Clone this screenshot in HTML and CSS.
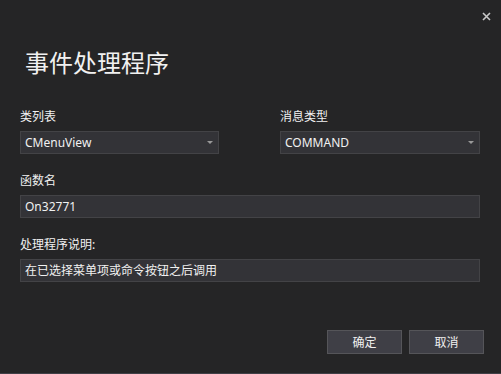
FILE: index.html
```html
<!DOCTYPE html>
<html lang="zh-CN">
<head>
    <meta charset="UTF-8">
    <title>事件处理程序</title>
    <link rel="stylesheet" href="styles.css">
</head>
<body>
    <div class="dialog">
        <div class="close">
            <svg width="9" height="9" viewBox="0 0 9 9"><path d="M1 1L8 8M8 1L1 8" stroke="#c8c8c8" stroke-width="1.6"/></svg>
        </div>
        <div class="title">事件处理程序</div>
        <div class="form">
            <div class="row">
                <div class="field half">
                    <div class="label">类列表</div>
                    <div class="box combo"><span>CMenuView</span><i class="arrow"></i></div>
                </div>
                <div class="field half">
                    <div class="label">消息类型</div>
                    <div class="box combo"><span>COMMAND</span><i class="arrow"></i></div>
                </div>
            </div>
            <div class="field">
                <div class="label">函数名</div>
                <div class="box">On32771</div>
            </div>
            <div class="field">
                <div class="label">处理程序说明:</div>
                <div class="box">在已选择菜单项或命令按钮之后调用</div>
            </div>
        </div>
        <div class="buttons">
            <button>确定</button>
            <button>取消</button>
        </div>
    </div>
</body>
</html>
```

FILE: styles.css
```css
body {
    margin: 0;
    background: #252526;
    font-family: 'Noto Sans', 'Noto Sans CJK SC', sans-serif;
    color: #f1f1f1;
}

.dialog {
    width: 501px;
    height: 374px;
    box-sizing: border-box;
    border-bottom: 1px solid #3f3f46;
    background: #252526;
    position: relative;
    display: flex;
    flex-direction: column;
}

.close {
    position: absolute;
    top: 12px;
    right: 10px;
    width: 9px;
    height: 9px;
    display: flex;
}

.title {
    margin: 47px 0 0 25px;
    font-size: 24px;
    line-height: 32px;
    height: 32px;
}

.form {
    margin-top: 30px;
    padding: 0 21px 0 20px;
    display: flex;
    flex-direction: column;
    gap: 19px;
}

.row {
    display: flex;
    gap: 61px;
}

.half {
    width: 199px;
}

.row .half:last-child {
    width: 200px;
}

.label {
    font-size: 12px;
    line-height: 16px;
    height: 16px;
    margin-bottom: 6px;
}

.box {
    height: 23px;
    box-sizing: border-box;
    border: 1px solid #434346;
    background: #333337;
    font-size: 12px;
    line-height: 21px;
    padding: 0 3px 0 4px;
    display: flex;
    align-items: center;
    white-space: nowrap;
}

.combo {
    justify-content: space-between;
}

.arrow {
    width: 0;
    height: 0;
    border-left: 3.5px solid transparent;
    border-right: 3.5px solid transparent;
    border-top: 3px solid #999;
    margin-right: 2px;
}

.buttons {
    margin-top: auto;
    margin-bottom: 19px;
    padding-right: 17px;
    display: flex;
    justify-content: flex-end;
    gap: 7px;
}

button {
    width: 75px;
    height: 24px;
    border: 1px solid #555559;
    background: #3f3f46;
    color: #f1f1f1;
    font-family: inherit;
    font-size: 12px;
    padding: 0;
}
```
